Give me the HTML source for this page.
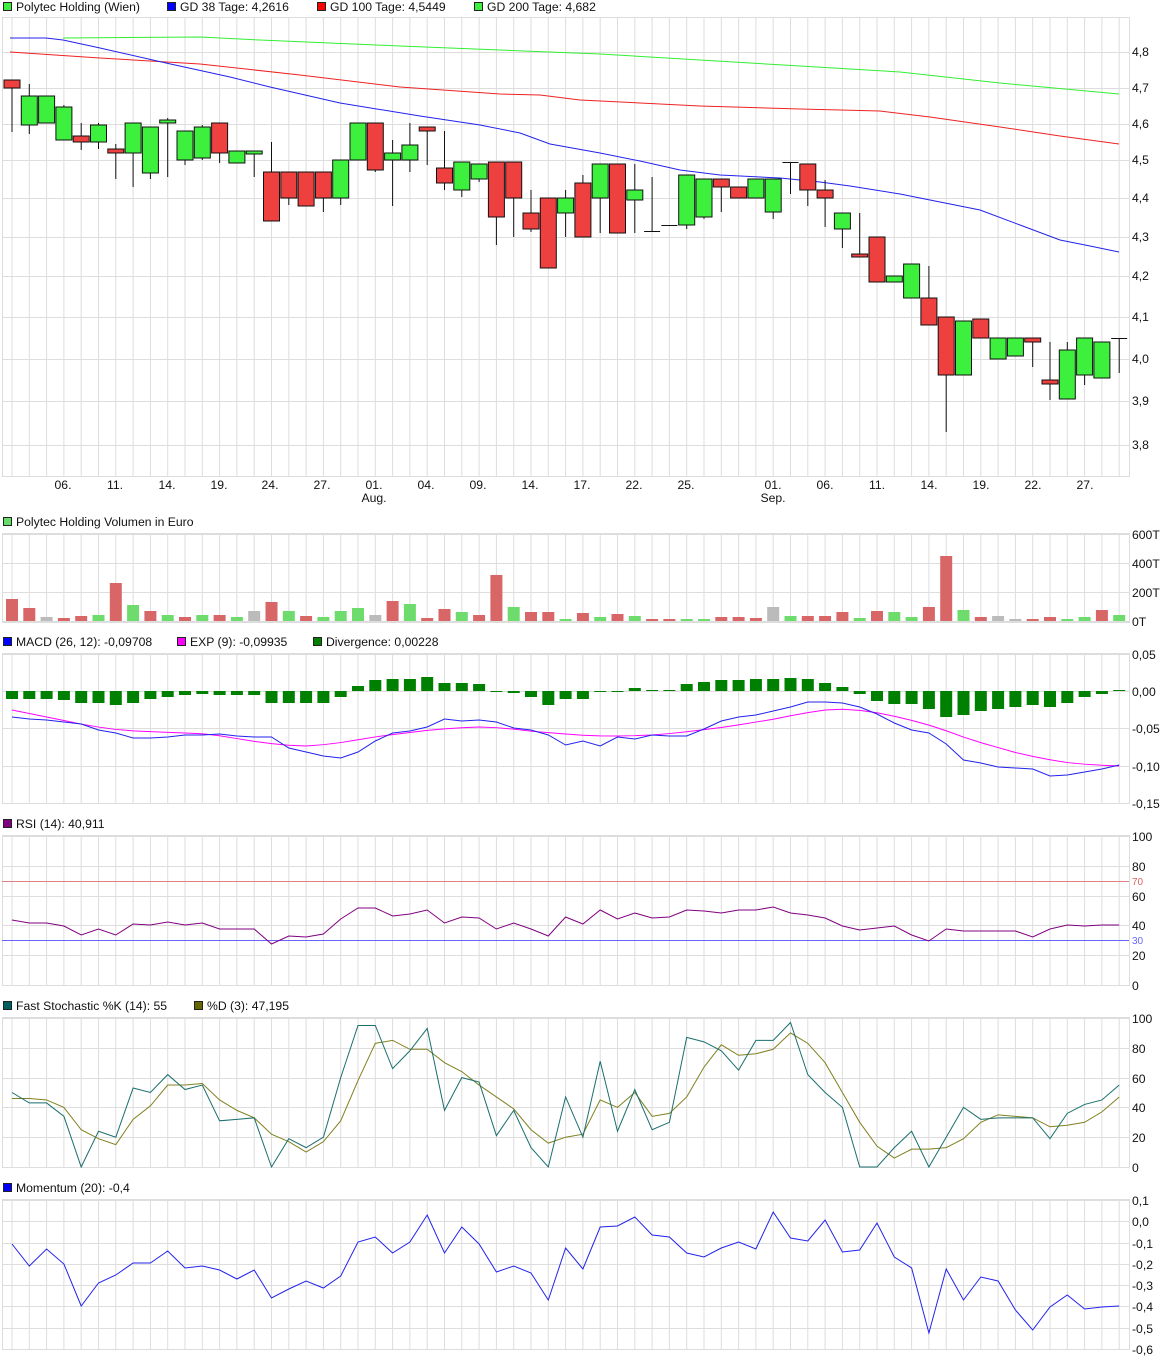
<!DOCTYPE html>
<html><head><meta charset="utf-8"><style>
body{margin:0;background:#fff;width:1175px;height:1361px;overflow:hidden}
svg{display:block}
text{font-family:"Liberation Sans",sans-serif;font-size:12.2px;fill:#111}
</style></head><body>
<svg id="s" width="1175" height="1361" xmlns="http://www.w3.org/2000/svg">
<g id="grid"></g>
<g id="shapes"></g>
<g id="labels">
<rect x="3.5" y="2.5" width="8" height="8" fill="#3ef03e" stroke="#222"/><text x="16" y="11">Polytec Holding (Wien)</text>
<rect x="167.5" y="2.5" width="8" height="8" fill="#0000ff" stroke="#222"/><text x="180" y="11">GD 38 Tage: 4,2616</text>
<rect x="317.5" y="2.5" width="8" height="8" fill="#ff0000" stroke="#222"/><text x="330" y="11">GD 100 Tage: 4,5449</text>
<rect x="474.5" y="2.5" width="8" height="8" fill="#3ef03e" stroke="#222"/><text x="487" y="11">GD 200 Tage: 4,682</text>
<text x="1132" y="56">4,8</text><text x="1132" y="92">4,7</text><text x="1132" y="128">4,6</text><text x="1132" y="164">4,5</text><text x="1132" y="202">4,4</text><text x="1132" y="241">4,3</text><text x="1132" y="280">4,2</text><text x="1132" y="321">4,1</text><text x="1132" y="363">4,0</text><text x="1132" y="405">3,9</text><text x="1132" y="449">3,8</text>
<g text-anchor="middle">
<text x="63" y="489">06.</text><text x="115" y="489">11.</text><text x="167" y="489">14.</text><text x="219" y="489">19.</text><text x="270" y="489">24.</text><text x="322" y="489">27.</text><text x="374" y="489">01.</text><text x="374" y="502">Aug.</text><text x="426" y="489">04.</text><text x="478" y="489">09.</text><text x="530" y="489">14.</text><text x="582" y="489">17.</text><text x="634" y="489">22.</text><text x="686" y="489">25.</text><text x="773" y="489">01.</text><text x="773" y="502">Sep.</text><text x="825" y="489">06.</text><text x="877" y="489">11.</text><text x="929" y="489">14.</text><text x="981" y="489">19.</text><text x="1033" y="489">22.</text><text x="1085" y="489">27.</text>
</g>
<rect x="3.5" y="517.5" width="8" height="8" fill="#66dd66" stroke="#222"/><text x="16" y="526">Polytec Holding Volumen in Euro</text>
<text x="1132" y="539">600T</text><text x="1132" y="568">400T</text><text x="1132" y="597">200T</text><text x="1132" y="626">0T</text>
<rect x="3.5" y="637.5" width="8" height="8" fill="#0000ff" stroke="#222"/><text x="16" y="646">MACD (26, 12): -0,09708</text>
<rect x="177.5" y="637.5" width="8" height="8" fill="#ff00ff" stroke="#222"/><text x="190" y="646">EXP (9): -0,09935</text>
<rect x="313.5" y="637.5" width="8" height="8" fill="#008000" stroke="#222"/><text x="326" y="646">Divergence: 0,00228</text>
<text x="1132" y="659">0,05</text><text x="1132" y="696">0,00</text><text x="1132" y="733">-0,05</text><text x="1132" y="771">-0,10</text><text x="1132" y="808">-0,15</text>
<rect x="3.5" y="819.5" width="8" height="8" fill="#800080" stroke="#222"/><text x="16" y="828">RSI (14): 40,911</text>
<text x="1132" y="841">100</text><text x="1132" y="871">80</text><text x="1132" y="901">60</text><text x="1132" y="930">40</text><text x="1132" y="960">20</text><text x="1132" y="990">0</text>
<text x="1132" y="885" style="font-size:10px;fill:#e06060">70</text><text x="1132" y="944" style="font-size:10px;fill:#6666ff">30</text>
<rect x="3.5" y="1001.5" width="8" height="8" fill="#006060" stroke="#222"/><text x="16" y="1010">Fast Stochastic %K (14): 55</text>
<rect x="194.5" y="1001.5" width="8" height="8" fill="#666600" stroke="#222"/><text x="207" y="1010">%D (3): 47,195</text>
<text x="1132" y="1023">100</text><text x="1132" y="1053">80</text><text x="1132" y="1083">60</text><text x="1132" y="1112">40</text><text x="1132" y="1142">20</text><text x="1132" y="1172">0</text>
<rect x="3.5" y="1183.5" width="8" height="8" fill="#0000ff" stroke="#222"/><text x="16" y="1192">Momentum (20): -0,4</text>
<text x="1132" y="1205">0,1</text><text x="1132" y="1226">0,0</text><text x="1132" y="1248">-0,1</text><text x="1132" y="1269">-0,2</text><text x="1132" y="1290">-0,3</text><text x="1132" y="1311">-0,4</text><text x="1132" y="1333">-0,5</text><text x="1132" y="1354">-0,6</text>
</g>
</svg>
<script>
var NS="http://www.w3.org/2000/svg";
var G=document.getElementById("grid"),S=document.getElementById("shapes");
function el(p,t,a){var e=document.createElementNS(NS,t);for(var k in a)e.setAttribute(k,a[k]);p.appendChild(e);return e;}
function X(i){return 12+i*17.3;}
var panels=[[17,476,[52,88,124,160,198,237,276,317,359,401,445]],[533,622,[534,563,592,621]],[653,803,[654,691,728,766,803]],[835,985,[836,866,896,925,955,985]],[1017,1167,[1018,1048,1078,1107,1137,1167]],[1199,1349,[1200,1221,1243,1264,1285,1306,1328,1349]]];
panels.forEach(function(p){
 el(G,"rect",{x:2.5,y:p[0]+.5,width:1127,height:p[1]-p[0],fill:"none",stroke:"#ddd"});
 for(var i=0;i<65;i++)el(G,"line",{x1:X(i),x2:X(i),y1:p[0],y2:p[1],stroke:"#ddd"});
 p[2].forEach(function(y){el(G,"line",{x1:2,x2:1129,y1:y+.5,y2:y+.5,stroke:"#ddd"});});
});
function poly(pts,c,w){el(S,"polyline",{points:pts.map(function(q){return q[0]+","+q[1]}).join(" "),fill:"none",stroke:c,"stroke-width":w||1});}
poly([[63,38],[200,37],[260,40],[400,46],[600,54],[800,66],[900,72],[1000,83],[1119,94]],"#33ee33");
poly([[10,52],[100,58],[200,64],[300,75],[400,87],[500,94],[540,95],[580,100],[700,106],[800,109],[880,111],[930,117],[1000,127],[1060,136],[1119,144]],"#ee2222");
poly([[10,38],[46,38],[63,40],[100,48],[166,63],[230,77],[270,87],[340,103],[420,116],[480,125],[520,133],[550,144],[600,153],[640,161],[680,170],[720,175],[780,178],[820,182],[850,186],[900,194],[940,202],[980,210],[1020,225],[1060,240],[1090,246],[1119,252]],"#2222ee");
var C=[[80,88,80,132,"r"],[96,125,84,134,"g"],[96,123,96,123,"g"],[107,140,105,140,"g"],[136,142,123,150,"r"],[125,142,123,149,"g"],[149,153,144,179,"r"],[123,153,123,187,"g"],[127,173,127,179,"g"],[120,123,118,177,"g"],[131,160,131,165,"g"],[127,158,125,160,"g"],[123,153,123,163,"r"],[151,163,151,163,"g"],[151,153,151,177,"g"],[172,221,142,221,"r"],[172,198,172,205,"r"],[172,206,172,206,"r"],[172,198,172,212,"r"],[160,198,160,205,"g"],[123,160,123,160,"g"],[123,170,123,172,"r"],[153,160,140,206,"g"],[145,160,123,172,"g"],[127,131,127,165,"r"],[168,183,131,190,"r"],[162,190,162,197,"g"],[164,179,164,182,"g"],[162,217,162,245,"r"],[162,198,162,237,"r"],[213,229,190,232,"r"],[198,268,198,268,"r"],[198,213,190,237,"g"],[183,237,175,237,"r"],[164,198,164,233,"g"],[164,233,164,233,"r"],[190,200,164,233,"g"],[231,231,177,231,"f"],[225,225,225,225,"f"],[175,225,175,229,"g"],[179,217,179,219,"g"],[179,187,179,212,"r"],[187,198,187,198,"r"],[179,198,179,198,"g"],[179,212,179,219,"g"],[162,162,162,194,"f"],[164,190,164,206,"r"],[190,198,180,227,"r"],[213,229,213,248,"g"],[254,256,213,256,"r"],[237,282,237,282,"r"],[276,282,276,282,"g"],[264,298,264,298,"g"],[298,325,266,325,"r"],[317,375,317,432,"r"],[321,375,321,375,"g"],[319,338,319,338,"r"],[338,359,338,359,"g"],[338,356,338,356,"g"],[338,342,338,367,"r"],[380,384,342,400,"r"],[350,399,342,399,"g"],[338,375,338,385,"g"],[342,378,342,378,"g"],[338,338,338,373,"f"]];
C.forEach(function(c,i){var x=X(i);
 el(S,"line",{x1:x,x2:x,y1:c[2],y2:c[3],stroke:"#111"});
 if(c[4]=="f")el(S,"line",{x1:x-8,x2:x+8,y1:c[0]+.5,y2:c[0]+.5,stroke:"#111"});
 else el(S,"rect",{x:x-8,y:c[0],width:16,height:Math.max(c[1]-c[0],3),fill:c[4]=="g"?"#3ef03e":"#ef4040",stroke:"#111"});
});
var V="22r 13r 4x 3r 5r 6g 38r 16g 10r 6g 4r 6g 6r 4g 10x 19r 10g 5r 4g 10g 13g 6x 20r 17g 3r 12r 9g 6r 46r 14g 9r 9r 2g 8r 4g 7r 5g 2r 2r 2g 2g 4r 4r 3r 14x 5g 5r 5r 9r 3g 10r 9g 4g 14r 65r 11g 4r 5x 2x 2r 4r 2g 4g 11r 6g".split(" ");
V.forEach(function(v,i){var h=parseInt(v),c={r:"#d96666",g:"#6ddc6d",x:"#bbb"}[v.slice(-1)];el(S,"rect",{x:X(i)-6,y:621-h,width:12,height:h,fill:c});});
var M=[-8,-8,-8,-9,-12,-12,-14,-12,-8,-6,-4,-3,-4,-4,-4,-12,-12,-12,-12,-6,5,11,12,12,14,8,8,7,-1,-2,-6,-14,-8,-8,-1,-1,3,1,1,7,9,11,11,12,12,13,12,8,4,-3,-10,-13,-13,-18,-26,-24,-20,-18,-16,-14,-16,-12,-6,-3,1];
M.forEach(function(v,i){el(S,"rect",{x:X(i)-6,y:v>0?691-v:691,width:12,height:Math.max(Math.abs(v),1),fill:"#008000"});});
function line(vals,c,f){poly(vals.map(function(v,i){return [X(i),f?f(v):v]}),c);}
function interp(kp){var out=[];for(var i=0;i<65;i++){var t=i*(kp.length-1)/64,a=Math.floor(t),b=Math.min(a+1,kp.length-1);out.push(kp[a]+(kp[b]-kp[a])*(t-a));}return out;}
line(interp([710,715,720,725,729,731,732,733,734,738,742,745,746,744,740,736,733,730,728,727,728,731,733,735,736,736,735,733,730,727,723,719,714,710,709,712,717,723,731,740,747,754,759,763,765,766]),"#ff00ff");
line([717,719,720,722,724,730,733,738,738,737,735,735,734,736,737,737,748,752,756,758,752,741,733,731,727,719,721,720,722,728,730,735,745,741,746,737,739,735,736,736,729,721,717,715,711,707,702,702,703,707,714,723,730,733,744,760,763,767,768,769,776,775,772,769,765],"#2222ee");
el(S,"line",{x1:2,x2:1129,y1:881.5,y2:881.5,stroke:"#e08080"});
el(S,"line",{x1:2,x2:1129,y1:940.5,y2:940.5,stroke:"#6666ff"});
line([920,923,923,926,935,929,935,924,925,922,925,923,929,929,929,944,936,937,934,919,908,908,916,914,910,923,917,918,929,923,929,936,917,924,910,919,913,918,917,910,911,913,910,910,907,913,915,918,926,930,928,926,935,941,929,931,931,931,931,937,929,925,926,925,925],"#800080");
var sf=function(v){return 1167-v*1.49};
line([46,46,45,40,25,19,15,32,41,55,55,56,45,38,33,22,17,10,17,31,58,83,85,79,79,70,64,55,47,39,25,16,20,22,45,40,50,34,36,47,67,82,75,76,79,90,83,70,50,30,14,6,12,12,13,19,30,35,34,33,27,28,30,37,47],"#808020",sf);
line([50,43,43,34,0,24,20,53,50,62,52,55,31,32,33,0,19,13,20,60,95,95,66,78,93,38,60,57,21,38,13,0,47,20,71,24,52,25,30,87,84,78,65,85,85,97,62,50,40,0,0,13,24,0,20,40,32,33,33,33,19,36,42,45,55],"#1a6e6e",sf);
line([1244,1266,1249,1264,1306,1283,1275,1263,1263,1251,1268,1266,1270,1279,1270,1298,1289,1281,1288,1276,1242,1237,1253,1242,1215,1253,1227,1244,1272,1266,1273,1300,1248,1269,1227,1226,1217,1235,1237,1253,1257,1248,1242,1249,1212,1238,1241,1220,1252,1250,1223,1257,1268,1333,1269,1300,1277,1281,1310,1330,1307,1295,1309,1307,1306],"#2222ee");
</script>
</body></html>
